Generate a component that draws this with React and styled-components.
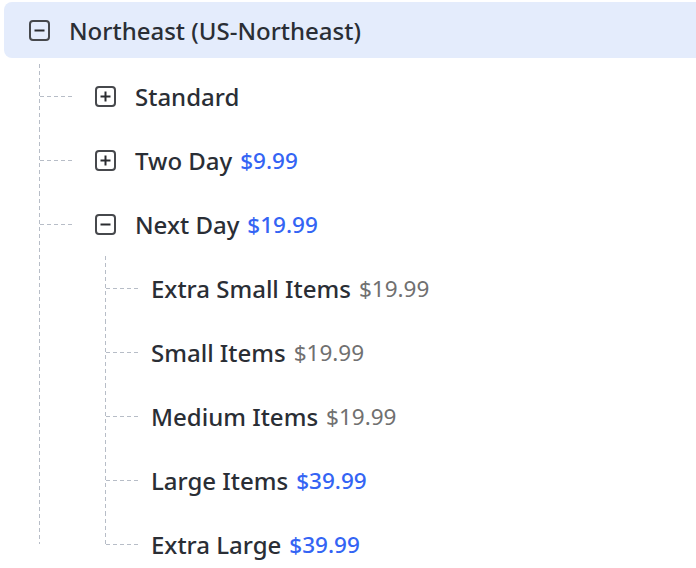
import React from "react";
import styled, { createGlobalStyle } from "styled-components";

const GlobalStyle = createGlobalStyle`
  body {
    margin: 0;
    background: #ffffff;
    font-family: "Noto Sans", "Open Sans", sans-serif;
    color: #2a2e35;
    overflow: hidden;
  }
`;

const LINE = "#b7bdc7";
const dashV = `repeating-linear-gradient(to bottom, ${LINE} 0 4px, transparent 4px 7px)`;
const dashH = `repeating-linear-gradient(to right, ${LINE} 0 4px, transparent 4px 7px)`;

const Tree = styled.div`
  padding: 2px 0 0 4px;
`;

const RootRow = styled.div`
  display: flex;
  align-items: center;
  gap: 19px;
  height: 56px;
  width: 720px;
  padding-left: 25px;
  background: #e4ecfc;
  border-radius: 8px;
  font-size: 24px;
  font-weight: 500;
  margin-bottom: 6px;
`;

const List = styled.ul`
  list-style: none;
  margin: 0 0 0 ${(p) => p.$indent}px;
  padding: 0;
`;

// vertical guide: full height, half a row for the last leaf, or stopping at the last nested row
const guide = (p) => {
  if (p.$last) return "1px 33px";
  if (p.$stop) return "1px calc(100% - 32px)";
  return "1px 100%";
};

const Item = styled.li`
  background-image: ${dashV};
  background-repeat: no-repeat;
  background-position: left top;
  background-size: ${guide};
  padding-left: 1px;
`;

const Row = styled.div`
  display: flex;
  align-items: center;
  height: 64px;
  font-size: 24px;
  font-weight: 500;
  white-space: nowrap;
`;

const Dash = styled.span`
  flex: none;
  width: 32px;
  height: 1px;
  background-image: ${dashH};
  margin-right: ${(p) => p.$gap}px;
`;

const Label = styled.span`
  margin-left: ${(p) => p.$offset || 0}px;
`;

const Price = styled.span`
  margin-left: 8px;
  font-size: 22.5px;
  font-weight: ${(p) => (p.$muted ? 400 : 500)};
  color: ${(p) => (p.$muted ? "#707070" : "#3464f4")};
`;

const Toggle = ({ open }) => (
  <svg width="21" height="21" viewBox="0 0 21 21" style={{ flex: "none" }}>
    <rect x="1" y="1" width="19" height="19" rx="3" fill="none" stroke="#46484c" strokeWidth="2" />
    <path d="M5.5 10.5h10" stroke="#2a2c30" strokeWidth="2" />
    {!open && <path d="M10.5 5.5v10" stroke="#2a2c30" strokeWidth="2" />}
  </svg>
);

const nextDay = [
  { name: "Extra Small Items", price: "$19.99", muted: true },
  { name: "Small Items", price: "$19.99", muted: true },
  { name: "Medium Items", price: "$19.99", muted: true },
  { name: "Large Items", price: "$39.99" },
  { name: "Extra Large", price: "$39.99" },
];

const services = [
  { name: "Standard", open: false },
  { name: "Two Day", price: "$9.99", open: false },
  { name: "Next Day", price: "$19.99", open: true, children: nextDay },
];

export default function App() {
  return (
    <>
      <GlobalStyle />
      <Tree>
        <RootRow>
          <Toggle open />
          <span>Northeast (US-Northeast)</span>
        </RootRow>
        <List $indent={35}>
          {services.map((s, idx) => (
            <Item key={s.name} $stop={idx === services.length - 1}>
              <Row>
                <Dash $gap={23} />
                <Toggle open={s.open} />
                <Label $offset={19}>{s.name}</Label>
                {s.price && <Price>{s.price}</Price>}
              </Row>
              {s.open && s.children && (
                <List $indent={65}>
                  {s.children.map((c, i) => (
                    <Item key={c.name} $last={i === s.children.length - 1}>
                      <Row>
                        <Dash $gap={13} />
                        <Label>{c.name}</Label>
                        <Price $muted={c.muted}>{c.price}</Price>
                      </Row>
                    </Item>
                  ))}
                </List>
              )}
            </Item>
          ))}
        </List>
      </Tree>
    </>
  );
}
